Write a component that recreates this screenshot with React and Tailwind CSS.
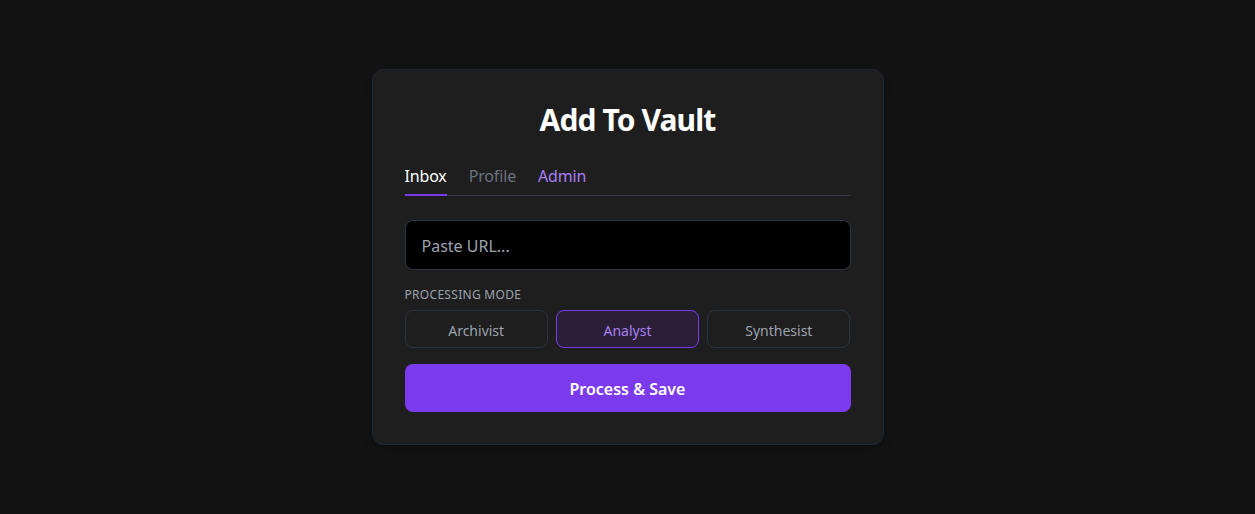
import React from "react";

export default function App() {
  const font = { fontFamily: '"Segoe UI", "Noto Sans", "Open Sans", sans-serif' };
  return (
    <div className="min-h-screen w-full bg-[#121212] flex items-center justify-center" style={font}>
      <div className="w-[512px] rounded-xl border border-[#1f2733] bg-[#1e1e1e] p-8 shadow-lg">
        <h1 className="text-center text-3xl font-bold tracking-[-0.03em] text-white leading-9">Add To Vault</h1>
        <div className="mt-[26px] flex gap-[22px] border-b border-[#3a3d45]">
          <button className="-mb-px border-b-2 border-[#7c3aed] pb-[6px] text-base tracking-[-0.01em] text-white">Inbox</button>
          <button className="-mb-px border-b-2 border-transparent pb-[6px] text-base tracking-[-0.01em] text-[#6b7280]">Profile</button>
          <button className="-mb-px border-b-2 border-transparent pb-[6px] text-base tracking-[-0.01em] text-[#a87ff5]">Admin</button>
        </div>
        <input
          type="text"
          placeholder="Paste URL..."
          className="mt-6 block w-full rounded-lg border border-[#2c3340] bg-black px-4 pt-[13px] pb-[11px] text-base leading-6 text-white placeholder:text-[#9ca3af] outline-none"
        />
        <div className="mt-[17px] mb-[7px] text-xs uppercase tracking-wide text-[#9ca3af]">Processing Mode</div>
        <div className="grid grid-cols-3 gap-2">
          <button className="rounded-lg border border-[#2c3340] pt-[10px] pb-[6px] text-sm leading-5 text-[#9ca3af]">Archivist</button>
          <button className="rounded-lg border border-[#7c3aed] bg-[#2a1f36] pt-[10px] pb-[6px] text-sm leading-5 text-[#a87ff5]">Analyst</button>
          <button className="rounded-lg border border-[#2c3340] pt-[10px] pb-[6px] text-sm leading-5 text-[#9ca3af]">Synthesist</button>
        </div>
        <button className="mt-4 w-full rounded-lg bg-[#7c3aed] pt-[13px] pb-[11px] text-base font-semibold leading-6 text-white">
          Process &amp; Save
        </button>
      </div>
    </div>
  );
}
